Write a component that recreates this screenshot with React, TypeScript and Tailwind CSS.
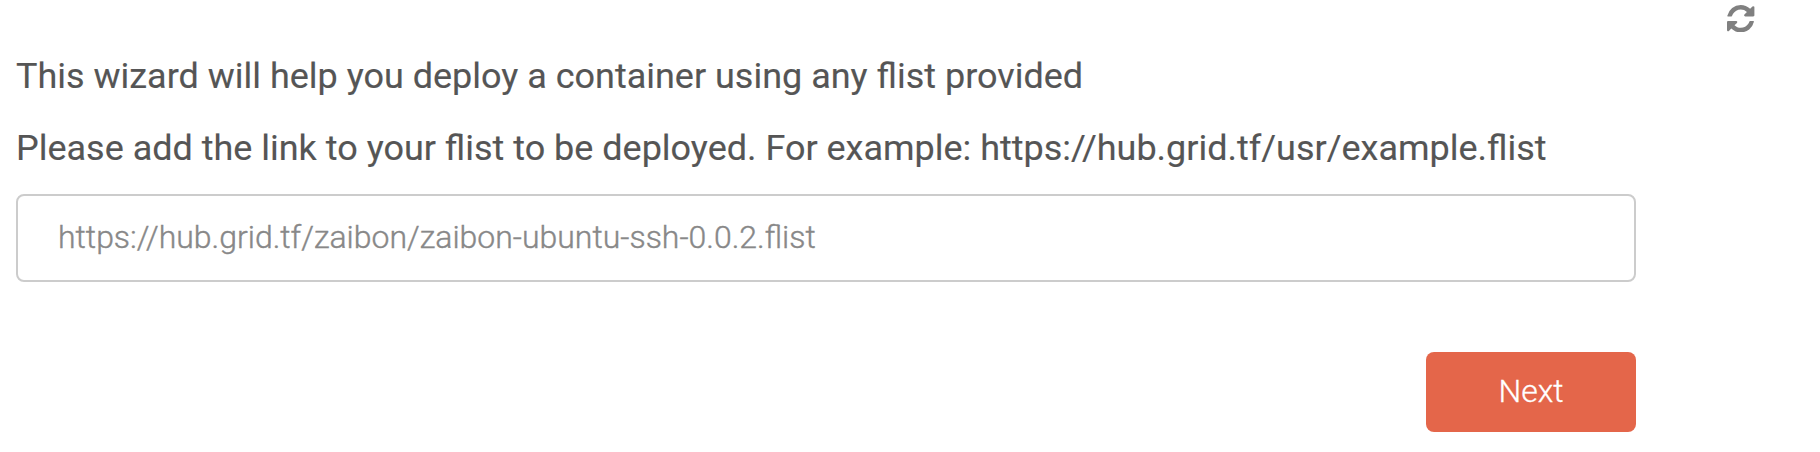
import React from "react";

function RefreshIcon() {
  return (
    <svg viewBox="0 0 1536 1536" className="mt-[4.5px] h-[27.4px] w-[27.4px] fill-[#808080]" aria-hidden="true">
      <path d="M1511 928q0 5-1 7-64 268-268 434.500T764 1536q-146 0-282.500-55T238 1324l-129 129q-19 19-45 19t-45-19-19-45V960q0-26 19-45t45-19h448q26 0 45 19t19 45-19 45l-137 137q71 66 161 102t187 36q134 0 250-65t186-179q11-17 53-117 8-23 30-23h192q13 0 22.500 9.500T1511 928zm25-800v448q0 26-19 45t-45 19h-448q-26 0-45-19t-19-45 19-45l138-138Q969 256 768 256q-134 0-250 65T332 500q-11 17-53 117-8 23-30 23H50q-13 0-22.500-9.500T18 608v-7q65-268 270-434.500T768 0q146 0 284 55.500T1297 212l130-129q19-19 45-19t45 19 19 45z" />
    </svg>
  );
}

export default function App() {
  return (
    <main className="h-[452px] w-[1820px] overflow-hidden bg-white pl-4 font-['Roboto',sans-serif]">
      <div className="flex h-[38px] items-start justify-end pr-[65.5px]">
        <button aria-label="Refresh">
          <RefreshIcon />
        </button>
      </div>
      <h1 className="mt-[13.5px] text-[35.97px] font-normal leading-[48px] text-[#555] [-webkit-text-stroke:0.15px_#555]">
        This wizard will help you deploy a container using any flist provided
      </h1>
      <label htmlFor="flist" className="mt-6 block text-[35.97px] leading-[48px] text-[#555] [-webkit-text-stroke:0.15px_#555]">
        Please add the link to your flist to be deployed. For example: https://hub.grid.tf/usr/example.flist
      </label>
      <input
        id="flist"
        className="mt-[22.5px] block h-[88px] w-[1620px] rounded-lg border-2 border-[#ccc] px-10 pb-[2px] text-[31.97px] font-light text-[#555] outline-none placeholder:text-[#888] placeholder:[-webkit-text-stroke:0.4px_#888]"
        placeholder="https://hub.grid.tf/zaibon/zaibon-ubuntu-ssh-0.0.2.flist"
      />
      <div className="mt-[70px] flex w-[1620px] justify-end">
        <button className="h-20 w-[210px] rounded-lg bg-[#e4664a] pb-[2px] text-[32px] font-light text-white [-webkit-text-stroke:0.3px_white]">
          Next
        </button>
      </div>
    </main>
  );
}
